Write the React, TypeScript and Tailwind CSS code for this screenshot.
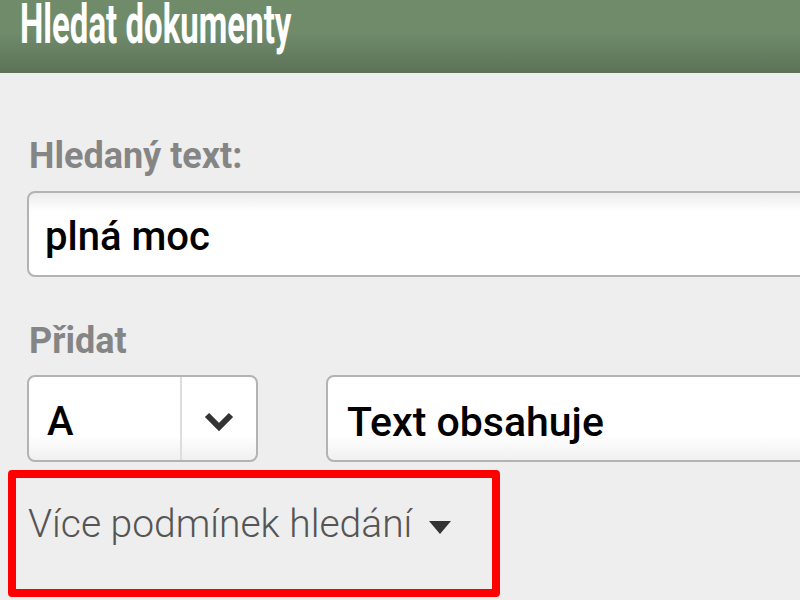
import React from 'react';

const font = { fontFamily: 'Roboto, "Liberation Sans", sans-serif' };

function ChevronDown() {
  return (
    <svg width="32" height="20" viewBox="0 0 32 20" className="mt-[6px]">
      <polyline points="4,3 16,15 28,3" fill="none" stroke="#333333" strokeWidth="6" />
    </svg>
  );
}

function Caret() {
  return (
    <svg width="22" height="13" viewBox="0 0 22 13" className="ml-[17px] mt-[6px]">
      <polygon points="0,0 22,0 11,13" fill="#333333" />
    </svg>
  );
}

export default function App() {
  return (
    <div className="w-[800px] h-[600px] overflow-hidden bg-[#eeeeee]" style={font}>
      <header className="h-[73px] bg-[linear-gradient(to_bottom,#6f8b6a_0%,#6f8b6a_45%,#5c7257_100%)] pl-[20px] overflow-hidden">
        <h1 className="origin-left scale-x-[0.6] text-[55px] leading-[48px] font-bold text-white whitespace-nowrap">
          Hledat dokumenty
        </h1>
      </header>

      <main className="pl-[27px] pt-[63px]">
        <label className="block pl-[2px] text-[36px] leading-[40px] font-bold text-[#858585]">
          Hledaný text:
        </label>
        <div className="mt-[15px] w-[800px] h-[86px] rounded-[8px] border-2 border-[#b3b3b3] bg-[linear-gradient(to_bottom,#ececec_0%,#ffffff_22%,#ffffff_100%)] pl-[16px] pt-[20px]">
          <span className="text-[40px] leading-[48px] font-medium text-black">plná moc</span>
        </div>

        <label className="block mt-[44px] pl-[2px] text-[36px] leading-[40px] font-bold text-[#858585]">
          Přidat
        </label>
        <div className="mt-[14px] flex gap-[68px]">
          <div className="shrink-0 flex w-[231px] h-[87px] rounded-[8px] border-2 border-[#b3b3b3] bg-[linear-gradient(to_bottom,#ffffff_0%,#ffffff_70%,#f0f0f0_100%)] overflow-hidden">
            <div className="w-[153px] pl-[18px] pt-[21px] text-[40px] leading-[48px] font-medium text-black border-r-2 border-[#dddddd]">
              A
            </div>
            <div className="flex-1 flex items-center justify-center">
              <ChevronDown />
            </div>
          </div>
          <div className="shrink-0 w-[500px] h-[87px] rounded-[8px] border-2 border-[#b3b3b3] bg-[linear-gradient(to_bottom,#ffffff_0%,#ffffff_70%,#f0f0f0_100%)] pl-[19px] pt-[21px]">
            <span className="text-[41px] leading-[48px] font-medium text-black">Text obsahuje</span>
          </div>
        </div>

        <div className="-ml-[19px] mt-[8px] w-[492px] h-[127px] rounded-[4px] border-[8px] border-[#ff0000] pl-[12px] pt-[24px]">
          <button className="flex items-center text-[39px] leading-[44px] font-light text-[#555555]">
            Více podmínek hledání
            <Caret />
          </button>
        </div>
      </main>
    </div>
  );
}
